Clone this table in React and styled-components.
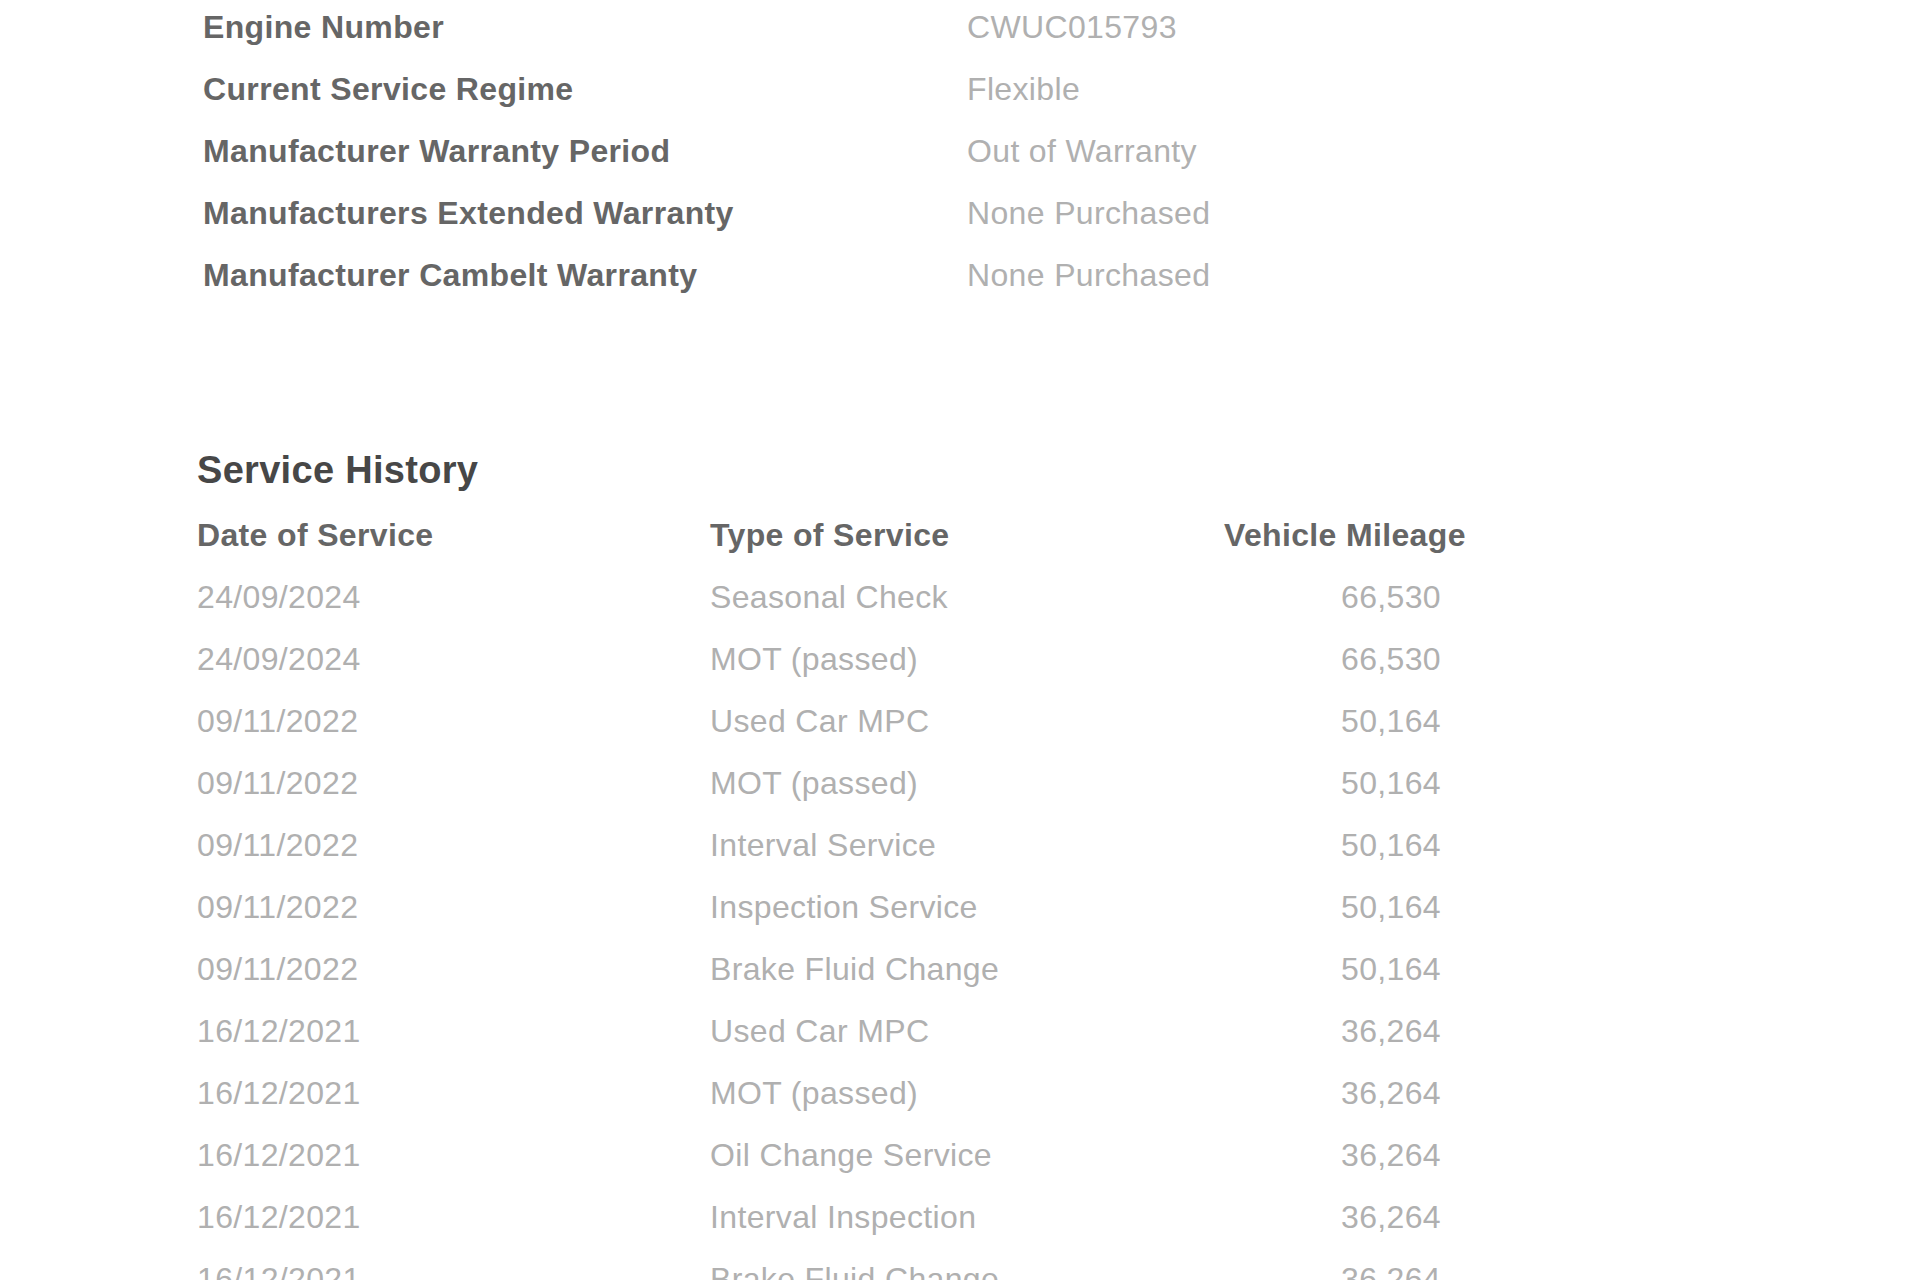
import styled, { createGlobalStyle } from "styled-components";

const GlobalStyle = createGlobalStyle`
    html, body {
        margin: 0;
        padding: 0;
        background: #ffffff;
    }
    body {
        font-family: "Liberation Sans", Arial, sans-serif;
        overflow: hidden;
    }
`;

const Page = styled.main`
    width: 1920px;
    height: 1280px;
    overflow: hidden;
    padding-left: 197px;
    box-sizing: border-box;
    letter-spacing: 0.35px;
`;

const Details = styled.section`
    margin-top: -4px;
    padding-left: 6px;
`;

const DetailRow = styled.div`
    display: grid;
    grid-template-columns: 764px auto;
    font-size: 32px;
    line-height: 62px;
    white-space: nowrap;
`;

const Label = styled.div`
    font-weight: bold;
    color: #666666;
`;

const Value = styled.div`
    color: #b0b0b0;
`;

const Heading = styled.h2`
    margin: 139px 0 9px;
    font-size: 38px;
    line-height: 50px;
    font-weight: bold;
    color: #474747;
    letter-spacing: 0.3px;
`;

const TableRow = styled.div`
    display: grid;
    grid-template-columns: 513px 514px 243px;
    font-size: 32px;
    line-height: 62px;
    white-space: nowrap;
    font-weight: ${(p) => (p.$head ? "bold" : "normal")};
    color: ${(p) => (p.$head ? "#666666" : "#b0b0b0")};
`;

const Mileage = styled.div`
    text-align: ${(p) => (p.$head ? "left" : "right")};
    padding-right: ${(p) => (p.$head ? "0" : "26px")};
`;

const details = [
    ["Engine Number", "CWUC015793"],
    ["Current Service Regime", "Flexible"],
    ["Manufacturer Warranty Period", "Out of Warranty"],
    ["Manufacturers Extended Warranty", "None Purchased"],
    ["Manufacturer Cambelt Warranty", "None Purchased"],
];

const history = [
    ["24/09/2024", "Seasonal Check", "66,530"],
    ["24/09/2024", "MOT (passed)", "66,530"],
    ["09/11/2022", "Used Car MPC", "50,164"],
    ["09/11/2022", "MOT (passed)", "50,164"],
    ["09/11/2022", "Interval Service", "50,164"],
    ["09/11/2022", "Inspection Service", "50,164"],
    ["09/11/2022", "Brake Fluid Change", "50,164"],
    ["16/12/2021", "Used Car MPC", "36,264"],
    ["16/12/2021", "MOT (passed)", "36,264"],
    ["16/12/2021", "Oil Change Service", "36,264"],
    ["16/12/2021", "Interval Inspection", "36,264"],
    ["16/12/2021", "Brake Fluid Change", "36,264"],
];

export default function App() {
    return (
        <>
            <GlobalStyle />
            <Page>
                <Details>
                    {details.map(([label, value]) => (
                        <DetailRow key={label}>
                            <Label>{label}</Label>
                            <Value>{value}</Value>
                        </DetailRow>
                    ))}
                </Details>
                <Heading>Service History</Heading>
                <TableRow $head>
                    <div>Date of Service</div>
                    <div>Type of Service</div>
                    <Mileage $head>Vehicle Mileage</Mileage>
                </TableRow>
                {history.map(([date, type, miles], i) => (
                    <TableRow key={i}>
                        <div>{date}</div>
                        <div>{type}</div>
                        <Mileage>{miles}</Mileage>
                    </TableRow>
                ))}
            </Page>
        </>
    );
}
